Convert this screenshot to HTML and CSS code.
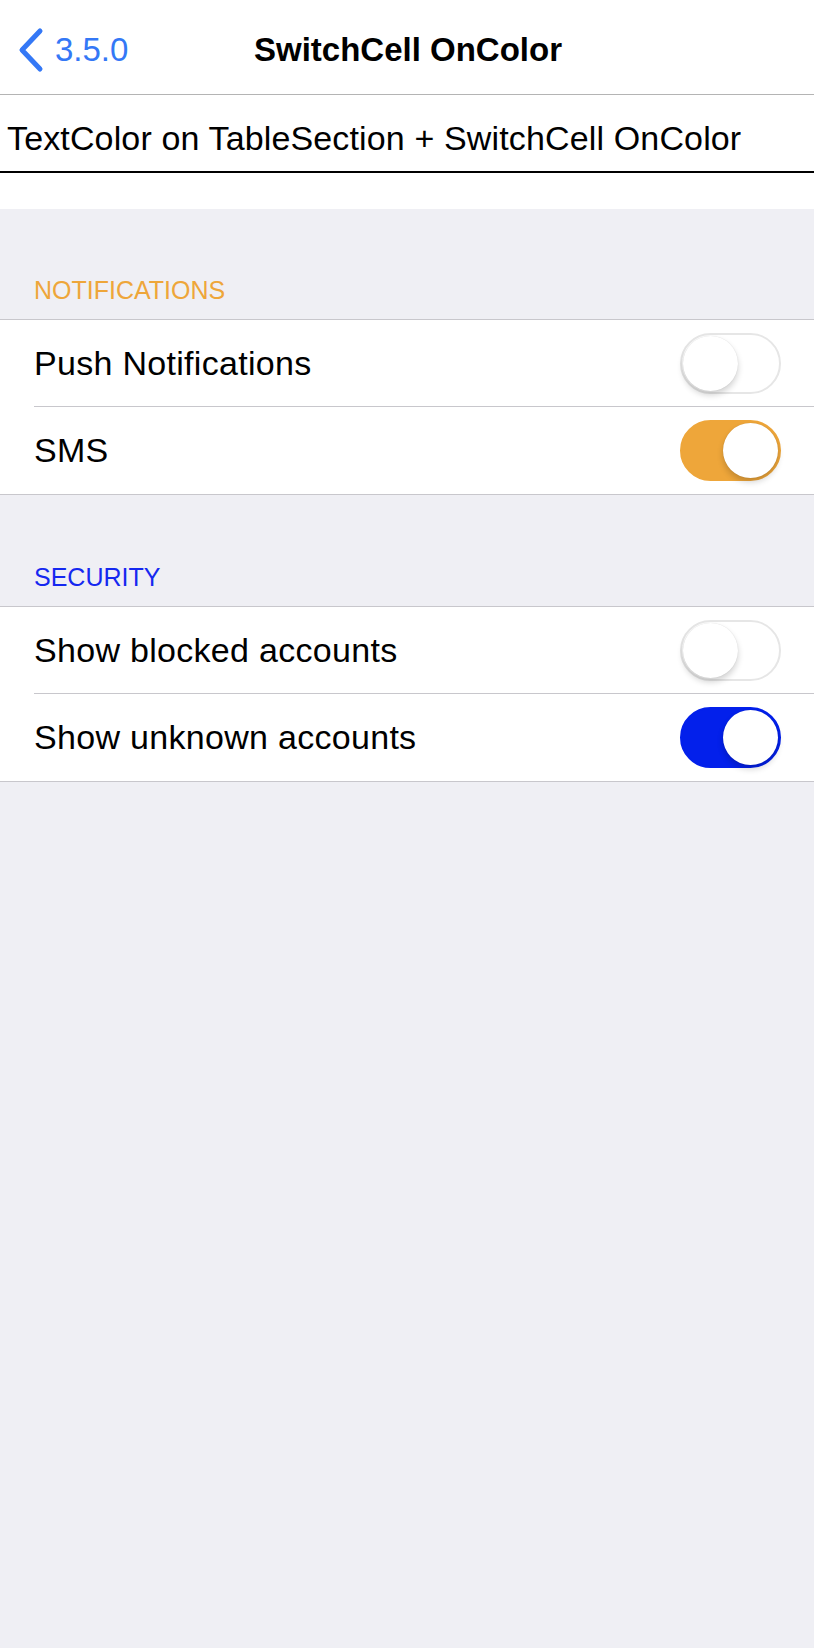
FILE: index.html
```html
<!DOCTYPE html>
<html>
<head>
<meta charset="utf-8">
<link rel="stylesheet" href="styles.css">
</head>
<body>
<div class="page">
  <header class="nav">
    <div class="back">
      <svg class="chev" width="30" height="46" viewBox="0 0 30 46"><path d="M23 4 L5 23 L23 42" fill="none" stroke="#3478F6" stroke-width="5" stroke-linecap="round" stroke-linejoin="round"/></svg>
      <span class="back-label">3.5.0</span>
    </div>
    <div class="title">SwitchCell OnColor</div>
    <div></div>
  </header>
  <div class="entry-wrap">
    <div class="entry">TextColor on TableSection + SwitchCell OnColor</div>
  </div>
  <div class="section-header orange">NOTIFICATIONS</div>
  <div class="group">
    <div class="row sep"><span class="label">Push Notifications</span><span class="switch"><span class="knob"></span></span></div>
    <div class="row"><span class="label">SMS</span><span class="switch on orange-bg"><span class="knob"></span></span></div>
  </div>
  <div class="section-header blue second">SECURITY</div>
  <div class="group">
    <div class="row sep"><span class="label">Show blocked accounts</span><span class="switch"><span class="knob"></span></span></div>
    <div class="row"><span class="label">Show unknown accounts</span><span class="switch on blue-bg"><span class="knob"></span></span></div>
  </div>
</div>
</body>
</html>
```
FILE: styles.css
```css
html, body {
  margin: 0;
  padding: 0;
}
body {
  background: #EFEFF4;
  font-family: "Liberation Sans", Arial, sans-serif;
  color: #000;
}
.page {
  width: 814px;
  min-height: 1648px;
}
.nav {
  height: 95px;
  box-sizing: border-box;
  padding-top: 6px;
  background: #fff;
  border-bottom: 1px solid #B4B4B4;
  display: grid;
  grid-template-columns: 1fr auto 1fr;
  align-items: center;
}
.back {
  display: flex;
  align-items: center;
  padding-left: 17px;
  gap: 8px;
}
.chev {
  display: block;
  margin-top: -1px;
}
.back-label {
  font-size: 33px;
  color: #3478F6;
  line-height: 40px;
}
.title {
  font-size: 33px;
  font-weight: bold;
  line-height: 40px;
  padding-left: 2px;
}
.entry-wrap {
  background: #fff;
  padding-bottom: 36px;
}
.entry {
  font-size: 34px;
  line-height: 40px;
  letter-spacing: 0.14px;
  padding: 23px 0 13px 7px;
  border-bottom: 2px solid #000;
}
.section-header {
  font-size: 25px;
  line-height: 30px;
  padding: 66px 0 14px 34px;
}
.section-header.second {
  padding-top: 67px;
}
.orange { color: #EEA63A; }
.blue { color: #1528F0; }
.group {
  background: #fff;
  border-top: 1px solid #C8C7CC;
  border-bottom: 1px solid #C8C7CC;
}
.row {
  height: 87px;
  box-sizing: border-box;
  margin-left: 34px;
  padding-right: 33px;
  display: flex;
  align-items: center;
  justify-content: space-between;
}
.row.sep {
  border-bottom: 1px solid #C8C7CC;
}
.label {
  font-size: 34px;
  letter-spacing: 0.3px;
}
.switch {
  position: relative;
  width: 101px;
  height: 61px;
  box-sizing: border-box;
  border-radius: 31px;
  border: 2px solid #E6E6E6;
  background: #fff;
}
.switch .knob {
  position: absolute;
  top: 1px;
  left: 1px;
  width: 55px;
  height: 55px;
  border-radius: 50%;
  background: #fff;
  box-shadow: 0 4px 6px rgba(0,0,0,0.18), 0 0 1px rgba(0,0,0,0.15);
}
.switch.on .knob {
  left: auto;
  right: 1px;
}
.orange-bg {
  background: #EEA63A;
  border-color: #EEA63A;
}
.blue-bg {
  background: #0320EB;
  border-color: #0320EB;
}
```
